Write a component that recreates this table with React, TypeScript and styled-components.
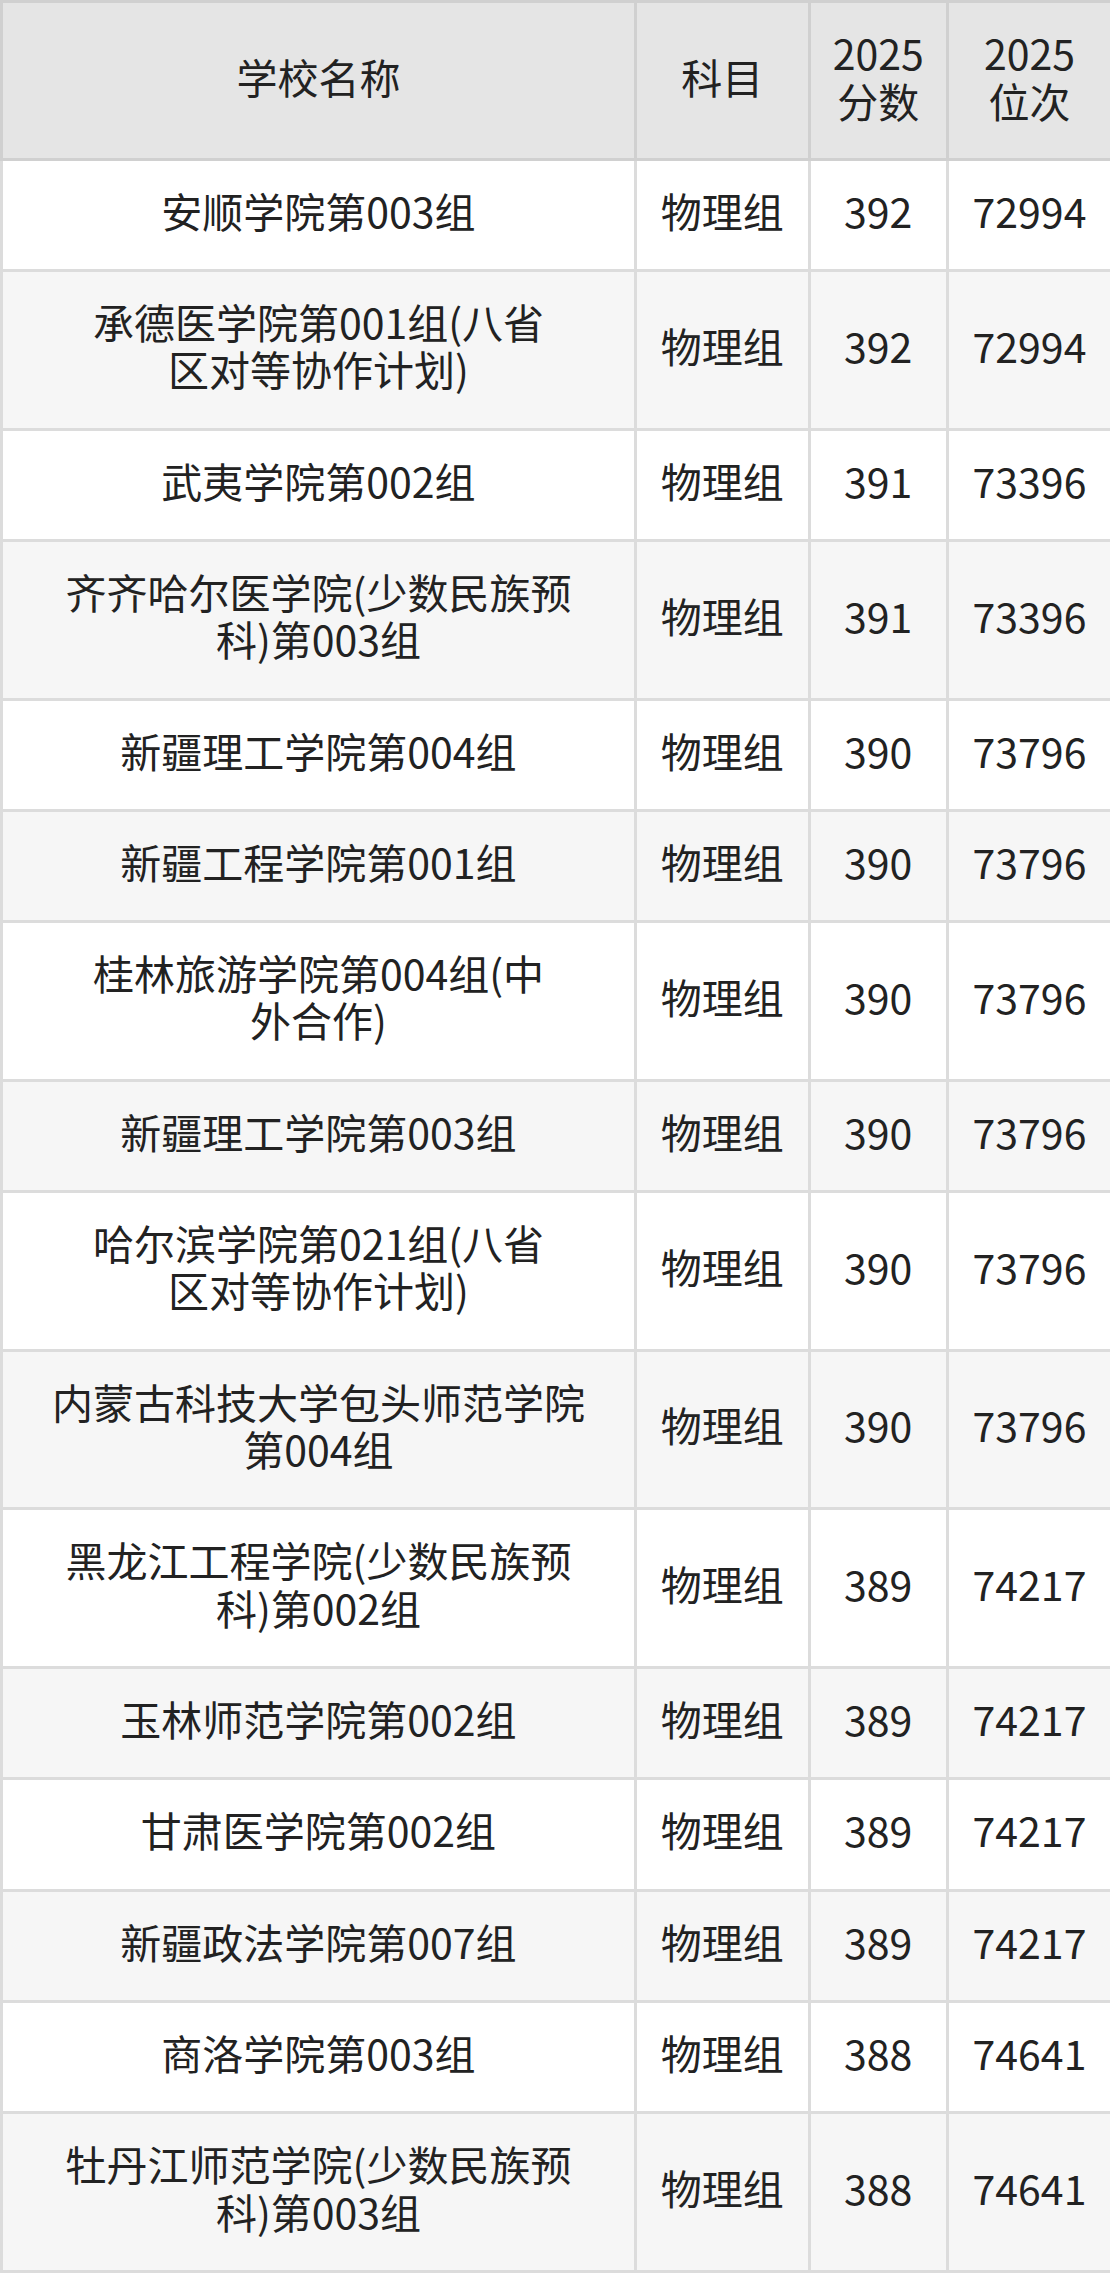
import styled, { createGlobalStyle } from 'styled-components'

const GlobalStyle = createGlobalStyle`
    html, body {
        margin: 0;
        padding: 0;
        background: #ffffff;
    }
`

const Table = styled.table`
    width: 1110px;
    border-collapse: collapse;
    table-layout: fixed;
    font-family: 'Noto Sans CJK SC', 'Noto Sans', sans-serif;
    font-size: 41px;
    line-height: 47.6px;
    color: #222222;
`

const HeadCell = styled.th`
    background: #e5e5e5;
    border: 3px solid #d0d0d0;
    font-weight: 400;
    text-align: center;
    vertical-align: middle;
    padding: 26px 0 33.4px;
    white-space: pre-line;
`

const Row = styled.tr<{ $striped: boolean }>`
    background: ${({ $striped }) => ($striped ? '#f6f6f6' : '#ffffff')};
`

const Cell = styled.td`
    border: 3px solid #dcdcdc;
    text-align: center;
    vertical-align: middle;
    padding: 26px 0 34.6px;
    white-space: pre-line;
`

const rows: [string, string, string][] = [
    ['安顺学院第003组', '392', '72994'],
    ['承德医学院第001组(八省\n区对等协作计划)', '392', '72994'],
    ['武夷学院第002组', '391', '73396'],
    ['齐齐哈尔医学院(少数民族预\n科)第003组', '391', '73396'],
    ['新疆理工学院第004组', '390', '73796'],
    ['新疆工程学院第001组', '390', '73796'],
    ['桂林旅游学院第004组(中\n外合作)', '390', '73796'],
    ['新疆理工学院第003组', '390', '73796'],
    ['哈尔滨学院第021组(八省\n区对等协作计划)', '390', '73796'],
    ['内蒙古科技大学包头师范学院\n第004组', '390', '73796'],
    ['黑龙江工程学院(少数民族预\n科)第002组', '389', '74217'],
    ['玉林师范学院第002组', '389', '74217'],
    ['甘肃医学院第002组', '389', '74217'],
    ['新疆政法学院第007组', '389', '74217'],
    ['商洛学院第003组', '388', '74641'],
    ['牡丹江师范学院(少数民族预\n科)第003组', '388', '74641'],
]

export default function App() {
    return (
        <>
            <GlobalStyle />
            <Table>
                <colgroup>
                    <col style={{ width: 634 }} />
                    <col style={{ width: 173.5 }} />
                    <col style={{ width: 138.5 }} />
                    <col style={{ width: 164 }} />
                </colgroup>
                <thead>
                    <tr>
                        <HeadCell>学校名称</HeadCell>
                        <HeadCell>科目</HeadCell>
                        <HeadCell>{'2025\n分数'}</HeadCell>
                        <HeadCell>{'2025\n位次'}</HeadCell>
                    </tr>
                </thead>
                <tbody>
                    {rows.map(([name, score, rank], i) => (
                        <Row key={i} $striped={i % 2 === 1}>
                            <Cell>{name}</Cell>
                            <Cell>物理组</Cell>
                            <Cell>{score}</Cell>
                            <Cell>{rank}</Cell>
                        </Row>
                    ))}
                </tbody>
            </Table>
        </>
    )
}
